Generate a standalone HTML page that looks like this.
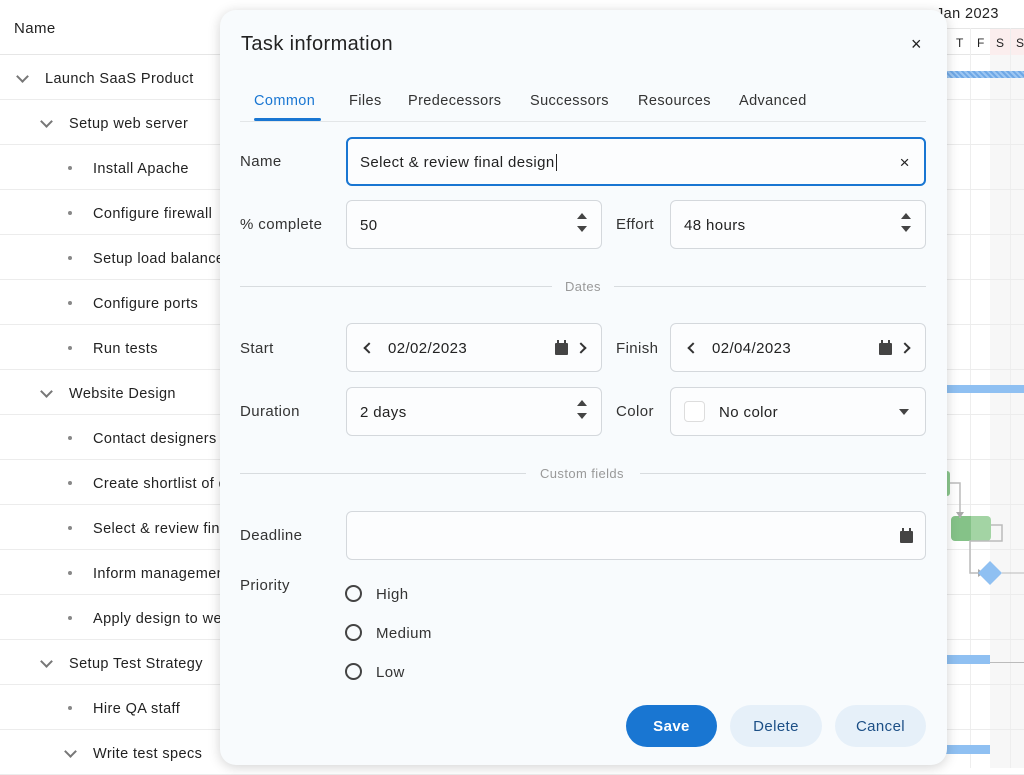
<!DOCTYPE html>
<html><head><style>
*{box-sizing:border-box;margin:0;padding:0}
body{width:1024px;height:768px;overflow:hidden;background:#fff;font-family:"Liberation Sans",sans-serif;color:#222;position:relative;letter-spacing:0.4px}
.abs{position:absolute}
.row{position:absolute;left:0;width:1024px;height:45px;border-bottom:1px solid #ececec}
.nm{position:absolute;font-size:14.5px;color:#222;white-space:nowrap}
.chev{position:absolute;width:9px;height:9px;border-right:2px solid #777;border-bottom:2px solid #777;transform:rotate(45deg)}
.dot{position:absolute;width:4px;height:4px;border-radius:50%;background:#888}
.dlg{position:absolute;left:220px;top:10px;width:727px;height:755px;background:#f8fbfd;border-radius:16px;box-shadow:0 2px 12px rgba(0,0,0,.18)}
.lbl{position:absolute;font-size:15px;color:#333}
.inp{position:absolute;height:49px;border:1px solid #d4d8dc;border-radius:6px;background:#fcfdfe;font-size:15px;color:#222;padding-left:13px;line-height:49px}
.spin{position:absolute;right:14px;top:12px;width:10px}
.up{width:0;height:0;border-left:5px solid transparent;border-right:5px solid transparent;border-bottom:6px solid #444;margin-bottom:7px}
.dn{width:0;height:0;border-left:5px solid transparent;border-right:5px solid transparent;border-top:6px solid #444}
.sep{position:absolute;height:1px;background:#d8dcdf}
.cal{position:absolute;width:13px;height:12px;background:#444;border-radius:1px}
.cal:before{content:"";position:absolute;left:2px;top:-3px;width:2px;height:4px;background:#444;box-shadow:7px 0 0 #444}
.ang{position:absolute;width:8px;height:8px;border-left:2px solid #333;border-bottom:2px solid #333}
.radio{position:absolute;width:17px;height:17px;border:2px solid #444;border-radius:50%}
.btn{position:absolute;height:42px;border-radius:21px;font-size:15px;text-align:center;line-height:44px}
</style></head><body>
<div class="abs" style="left:0;top:0;width:1024px;height:55px;border-bottom:1px solid #e6e6e6"></div>
<div class="nm" style="left:14px;top:20px;font-size:15px">Name</div>
<div class="abs" style="left:990px;top:28px;width:34px;height:740px;background:#f7f7f7"></div>
<div class="abs" style="left:990px;top:28px;width:34px;height:27px;background:#fbeeee"></div>
<div class="abs" style="left:947px;top:28px;width:77px;height:1px;background:#e6e6e6"></div>
<div class="nm" style="left:936px;top:6px;font-size:14.5px">Jan 2023</div>
<div class="nm" style="left:956px;top:36px;font-size:12px">T</div>
<div class="nm" style="left:977px;top:36px;font-size:12px">F</div>
<div class="nm" style="left:996px;top:36px;font-size:12px">S</div>
<div class="nm" style="left:1016px;top:36px;font-size:12px">S</div>
<div class="abs" style="left:970px;top:28px;width:1px;height:740px;background:#eee"></div>
<div class="abs" style="left:1010px;top:28px;width:1px;height:740px;background:#eee"></div>

<div class="row" style="top:55px"></div><div class="chev" style="left:18px;top:72px"></div><div class="nm" style="left:45px;top:71px">Launch SaaS Product</div>
<div class="row" style="top:100px"></div><div class="chev" style="left:42px;top:117px"></div><div class="nm" style="left:69px;top:116px">Setup web server</div>
<div class="row" style="top:145px"></div><div class="dot" style="left:68px;top:166px"></div><div class="nm" style="left:93px;top:161px">Install Apache</div>
<div class="row" style="top:190px"></div><div class="dot" style="left:68px;top:211px"></div><div class="nm" style="left:93px;top:206px">Configure firewall</div>
<div class="row" style="top:235px"></div><div class="dot" style="left:68px;top:256px"></div><div class="nm" style="left:93px;top:251px">Setup load balancer</div>
<div class="row" style="top:280px"></div><div class="dot" style="left:68px;top:301px"></div><div class="nm" style="left:93px;top:296px">Configure ports</div>
<div class="row" style="top:325px"></div><div class="dot" style="left:68px;top:346px"></div><div class="nm" style="left:93px;top:341px">Run tests</div>
<div class="row" style="top:370px"></div><div class="chev" style="left:42px;top:387px"></div><div class="nm" style="left:69px;top:386px">Website Design</div>
<div class="row" style="top:415px"></div><div class="dot" style="left:68px;top:436px"></div><div class="nm" style="left:93px;top:431px">Contact designers</div>
<div class="row" style="top:460px"></div><div class="dot" style="left:68px;top:481px"></div><div class="nm" style="left:93px;top:476px">Create shortlist of designers</div>
<div class="row" style="top:505px"></div><div class="dot" style="left:68px;top:526px"></div><div class="nm" style="left:93px;top:521px">Select &amp; review final design</div>
<div class="row" style="top:550px"></div><div class="dot" style="left:68px;top:571px"></div><div class="nm" style="left:93px;top:566px">Inform management</div>
<div class="row" style="top:595px"></div><div class="dot" style="left:68px;top:616px"></div><div class="nm" style="left:93px;top:611px">Apply design to website</div>
<div class="row" style="top:640px"></div><div class="chev" style="left:42px;top:657px"></div><div class="nm" style="left:69px;top:656px">Setup Test Strategy</div>
<div class="row" style="top:685px"></div><div class="dot" style="left:68px;top:706px"></div><div class="nm" style="left:93px;top:701px">Hire QA staff</div>
<div class="row" style="top:730px"></div><div class="chev" style="left:66px;top:747px"></div><div class="nm" style="left:93px;top:746px">Write test specs</div>

<div class="abs" style="left:945px;top:71px;width:79px;height:7px;background:repeating-linear-gradient(45deg,#6fa8e6 0 2px,#9cc6f2 2px 4px)"></div>
<div class="abs" style="left:945px;top:385px;width:79px;height:8px;background:#8fc0f2"></div>
<div class="abs" style="left:940px;top:471px;width:10px;height:25px;background:#8cc88e;border-radius:3px"></div>
<div class="abs" style="left:951px;top:516px;width:40px;height:25px;border-radius:4px;background:linear-gradient(90deg,#85c288 50%,#a3d4a4 50%)"></div>
<svg class="abs" style="left:940px;top:480px" width="84" height="110"><path d="M10 3H20V38" fill="none" stroke="#bbb" stroke-width="1.5"/><path d="M16 32L20 38L24 32Z" fill="#aaa"/><path d="M51 45H62V61H30V93H40" fill="none" stroke="#bbb" stroke-width="1.5"/><path d="M38 89L44 93L38 97Z" fill="#aaa"/><path d="M50 81L62 93L50 105L38 93Z" fill="#8fc0f2"/><path d="M62 93H84" stroke="#bbb"/></svg>
<div class="abs" style="left:945px;top:655px;width:45px;height:9px;background:#8fc0f2"></div>
<div class="abs" style="left:990px;top:662px;width:34px;height:1px;background:#bbb"></div>
<div class="abs" style="left:945px;top:745px;width:45px;height:9px;background:#8fc0f2"></div>

<div class="dlg">
<div class="abs" style="left:21px;top:23px;font-size:20px;color:#222">Task information</div>
<div class="abs" style="left:691px;top:24px;font-size:18px;color:#222">×</div>
<div class="abs" style="left:34px;top:83px;font-size:14.5px;color:#1976d2">Common</div>
<div class="abs" style="left:129px;top:83px;font-size:14.5px;color:#333">Files</div>
<div class="abs" style="left:188px;top:83px;font-size:14.5px;color:#333">Predecessors</div>
<div class="abs" style="left:310px;top:83px;font-size:14.5px;color:#333">Successors</div>
<div class="abs" style="left:418px;top:83px;font-size:14.5px;color:#333">Resources</div>
<div class="abs" style="left:519px;top:83px;font-size:14.5px;color:#333">Advanced</div>
<div class="sep" style="left:20px;top:111px;width:686px;background:#e3e6e8"></div>
<div class="abs" style="left:34px;top:108px;width:67px;height:3px;background:#1976d2;border-radius:2px"></div>

<div class="lbl" style="left:20px;top:143px">Name</div>
<div class="inp" style="left:126px;top:127px;width:580px;border:2px solid #1976d2;line-height:47px;padding-left:12px">Select &amp; review final design<span style="border-left:1px solid #222;margin-left:1px"></span><span class="abs" style="right:14px;top:0;font-size:17px">×</span></div>

<div class="lbl" style="left:20px;top:206px">% complete</div>
<div class="inp" style="left:126px;top:190px;width:256px">50<div class="spin"><div class="up"></div><div class="dn"></div></div></div>
<div class="lbl" style="left:396px;top:206px">Effort</div>
<div class="inp" style="left:450px;top:190px;width:256px">48 hours<div class="spin"><div class="up"></div><div class="dn"></div></div></div>

<div class="sep" style="left:20px;top:276px;width:312px"></div>
<div class="abs" style="left:345px;top:269px;font-size:13px;color:#999">Dates</div>
<div class="sep" style="left:394px;top:276px;width:312px"></div>

<div class="lbl" style="left:20px;top:330px">Start</div>
<div class="inp" style="left:126px;top:313px;width:256px;padding-left:41px">02/02/2023<div class="ang" style="left:18px;top:20px;transform:rotate(45deg)"></div><div class="cal" style="left:208px;top:19px"></div><div class="ang" style="left:230px;top:20px;transform:rotate(-135deg)"></div></div>
<div class="lbl" style="left:396px;top:330px">Finish</div>
<div class="inp" style="left:450px;top:313px;width:256px;padding-left:41px">02/04/2023<div class="ang" style="left:18px;top:20px;transform:rotate(45deg)"></div><div class="cal" style="left:208px;top:19px"></div><div class="ang" style="left:230px;top:20px;transform:rotate(-135deg)"></div></div>

<div class="lbl" style="left:20px;top:393px">Duration</div>
<div class="inp" style="left:126px;top:377px;width:256px">2 days<div class="spin"><div class="up"></div><div class="dn"></div></div></div>
<div class="lbl" style="left:396px;top:393px">Color</div>
<div class="inp" style="left:450px;top:377px;width:256px;padding-left:48px">No color<div class="abs" style="left:13px;top:13px;width:21px;height:21px;border:1px solid #ddd;border-radius:4px;background:#fff"></div><div class="abs" style="right:16px;top:21px;border-left:5px solid transparent;border-right:5px solid transparent;border-top:6px solid #444"></div></div>

<div class="sep" style="left:20px;top:463px;width:286px"></div>
<div class="abs" style="left:320px;top:456px;font-size:13px;color:#999">Custom fields</div>
<div class="sep" style="left:420px;top:463px;width:286px"></div>

<div class="lbl" style="left:20px;top:517px">Deadline</div>
<div class="inp" style="left:126px;top:501px;width:580px"><div class="cal" style="left:553px;top:19px"></div></div>

<div class="lbl" style="left:20px;top:567px">Priority</div>
<div class="radio" style="left:125px;top:575px"></div><div class="lbl" style="left:156px;top:576px">High</div>
<div class="radio" style="left:125px;top:614px"></div><div class="lbl" style="left:156px;top:615px">Medium</div>
<div class="radio" style="left:125px;top:653px"></div><div class="lbl" style="left:156px;top:654px">Low</div>

<div class="btn" style="left:406px;top:695px;width:91px;background:#1976d2;color:#fff;font-weight:bold">Save</div>
<div class="btn" style="left:510px;top:695px;width:92px;background:#e6f0f9;color:#1c4f86">Delete</div>
<div class="btn" style="left:615px;top:695px;width:91px;background:#e6f0f9;color:#1c4f86">Cancel</div>
</div>
</body></html>
